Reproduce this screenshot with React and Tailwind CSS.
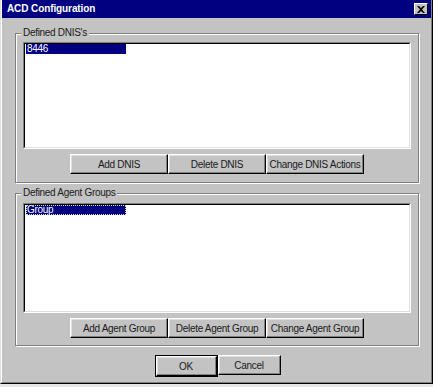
import React from "react";

function Btn({ children, w }) {
  return (
    <div
      className={`h-[20px] ${w} flex items-center justify-center border border-t-white border-l-white border-r-black border-b-black shadow-[inset_-1px_-1px_0_#808080,inset_1px_1px_0_#dfdfdf] text-[10px] tracking-[-0.3px] text-[#1a1a1a]`}
    >
      {children}
    </div>
  );
}

function GroupBox({ label, children, className }) {
  return (
    <div
      className={`relative ml-[13px] w-[404px] border border-[#808080] shadow-[inset_1px_1px_0_#fff,1px_1px_0_#fff] ${className}`}
    >
      <span className="absolute left-[5px] top-[-7px] bg-[#c3c3c3] px-[2px] text-[10px] leading-[12px] tracking-[-0.3px] text-[#1a1a1a]">
        {label}
      </span>
      {children}
    </div>
  );
}

function ListBox({ h, children }) {
  return (
    <div className={`ml-[7px] w-[388px] ${h} border border-t-[#808080] border-l-[#808080] border-r-white border-b-white`}>
      <div className="h-full w-full border border-t-black border-l-black border-r-[#dfdfdf] border-b-[#dfdfdf] bg-white">
        {children}
      </div>
    </div>
  );
}

export default function App() {
  return (
    <div className="w-[433px] h-[387px] bg-[#e6e6e6] font-['Liberation_Sans',Arial,sans-serif]">
      <div className="w-[433px] h-[384px] border-l border-r border-b border-l-[#dfdfdf] border-r-black border-b-black">
        <div className="h-full w-full border-l border-r border-b border-l-white border-r-[#808080] border-b-[#808080] bg-[#c3c3c3] flex flex-col">
          <div className="h-[18px] bg-[#000080] flex items-center justify-between pl-[5px] pr-[3px]">
            <span className="text-white font-bold text-[10px] tracking-[-0.1px] leading-none">ACD Configuration</span>
            <div className="w-[14px] h-[12px] bg-[#c3c3c3] border border-t-white border-l-white border-r-black border-b-black flex items-center justify-center">
              <svg width="8" height="7" viewBox="0 0 8 7">
                <path d="M0 0h2l2 2 2-2h2L5 3.5 8 7H6L4 5 2 7H0l3-3.5z" fill="#000" />
              </svg>
            </div>
          </div>

          <GroupBox label="Defined DNIS's" className="mt-[15px] pt-[8px] pb-[8px]">
            <ListBox h="h-[107px]">
              <div className="ml-[1px] w-[100px] h-[10px] bg-[#000080] text-white text-[10px] leading-[10px] tracking-[-0.3px] pl-[1px]">
                8446
              </div>
            </ListBox>
            <div className="mt-[5px] flex justify-center">
              <Btn w="w-[98px]">Add DNIS</Btn>
              <Btn w="w-[98px]">Delete DNIS</Btn>
              <Btn w="w-[98px]">Change DNIS Actions</Btn>
            </div>
          </GroupBox>

          <GroupBox label="Defined Agent Groups" className="mt-[10px] pt-[9px] pb-[7px]">
            <ListBox h="h-[110px]">
              <div className="ml-[1px] w-[100px] h-[10px] bg-[#000080] text-white text-[10px] leading-[10px] tracking-[-0.3px] pl-[1px] outline outline-1 outline-dotted outline-[#d8d8a0] -outline-offset-1">
                Group
              </div>
            </ListBox>
            <div className="mt-[5px] flex justify-center">
              <Btn w="w-[98px]">Add Agent Group</Btn>
              <Btn w="w-[98px]">Delete Agent Group</Btn>
              <Btn w="w-[98px]">Change Agent Group</Btn>
            </div>
          </GroupBox>

          <div className="mt-[9px] flex justify-center pl-[2px]">
            <div className="border border-black">
              <Btn w="w-[61px]">OK</Btn>
            </div>
            <Btn w="w-[63px]">Cancel</Btn>
          </div>
        </div>
      </div>
    </div>
  );
}
